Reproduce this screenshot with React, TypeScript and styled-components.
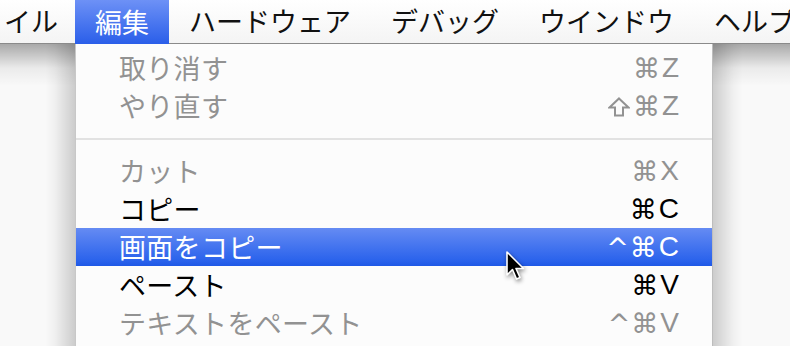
import styled, { createGlobalStyle } from 'styled-components'

const Global = createGlobalStyle`
  html, body {
    margin: 0;
    padding: 0;
    background: #f7f7f7;
  }
  body {
    font-family: "Noto Sans CJK JP", "DejaVu Sans", sans-serif;
  }
`

const Screen = styled.div`
  position: relative;
  width: 790px;
  height: 346px;
  overflow: hidden;
  display: flex;
  flex-direction: column;
  background: #f7f7f7;
`

const MenuBar = styled.div`
  display: flex;
  height: 43px;
  flex: none;
  background: linear-gradient(#ffffff, #f4f4f4);
  border-bottom: 1px solid #8a8a8a;
  white-space: nowrap;
`

const BarItem = styled.div<{ $active?: boolean }>`
  display: flex;
  align-items: center;
  flex: none;
  padding: 0 20px 2px;
  font-size: 27px;
  line-height: 1;
  color: ${(p) => (p.$active ? '#ffffff' : '#111111')};
  background: ${(p) => (p.$active ? 'linear-gradient(#6d91f6, #2a5ee9)' : 'transparent')};
  margin-bottom: ${(p) => (p.$active ? '-1px' : '0')};
`

const FirstItem = styled(BarItem)`
  padding-left: 4px;
  padding-right: 17px;
`

const Below = styled.div`
  display: flex;
  flex: 1;
  min-height: 0;
`

const Shade = styled.div<{ $side: 'left' | 'right' }>`
  flex: ${(p) => (p.$side === 'left' ? '0 0 75px' : '1')};
  background:
    linear-gradient(rgba(0, 0, 0, 0.32), rgba(0, 0, 0, 0.06) 24px, rgba(0, 0, 0, 0) 42px),
    linear-gradient(
      ${(p) => (p.$side === 'left' ? 'to left' : 'to right')},
      rgba(0, 0, 0, 0.18),
      rgba(0, 0, 0, 0.04) 20px,
      rgba(0, 0, 0, 0) 30px
    ),
    #f9f9f9;
`

const Menu = styled.div`
  flex: 0 0 638px;
  background: #fcfcfc;
  border-left: 1px solid #c8c8c8;
  border-right: 1px solid #bdbdbd;
  box-sizing: border-box;
  padding-top: 5px;
  display: flex;
  flex-direction: column;
`

const Row = styled.div<{ $disabled?: boolean; $selected?: boolean }>`
  display: flex;
  align-items: center;
  justify-content: space-between;
  height: 38px;
  flex: none;
  padding: 0 33px 0 43px;
  font-size: 27px;
  line-height: 1;
  color: ${(p) => (p.$selected ? '#ffffff' : p.$disabled ? '#929292' : '#000000')};
  background: ${(p) => (p.$selected ? 'linear-gradient(#658bf3, #2b63ec 85%, #1f58e6)' : 'transparent')};
`

const Label = styled.span`
  padding-bottom: 2px;
  letter-spacing: 0.3px;
`

const Keys = styled.span`
  display: flex;
  align-items: center;
  font-family: "DejaVu Sans", "Liberation Sans", sans-serif;
  font-size: 27px;
`

const Mods = styled.span`
  display: flex;
  align-items: center;
  letter-spacing: 1px;
`

const ShiftIcon = styled.svg`
  margin-right: 3px;
  margin-top: 1px;
`

const Key = styled.span`
  font-family: "Liberation Sans", "DejaVu Sans", sans-serif;
  font-size: 28px;
  margin-left: 1px;
`

const Separator = styled.div`
  height: 27px;
  flex: none;
  display: flex;
  align-items: center;
  &::after {
    content: '';
    flex: 1;
    height: 2px;
    background: #e2e2e2;
  }
`

const Cursor = styled.svg`
  position: absolute;
  left: 505px;
  top: 251px;
  filter: drop-shadow(1px 2px 2px rgba(0, 0, 0, 0.45));
`

type Item = {
  label: string
  mods?: string
  shift?: boolean
  key?: string
  disabled?: boolean
  selected?: boolean
  sep?: boolean
}

const items: Item[] = [
  { label: '取り消す', mods: '⌘', key: 'Z', disabled: true },
  { label: 'やり直す', mods: '⌘', shift: true, key: 'Z', disabled: true },
  { label: '', sep: true },
  { label: 'カット', mods: '⌘', key: 'X', disabled: true },
  { label: 'コピー', mods: '⌘', key: 'C' },
  { label: '画面をコピー', mods: '^⌘', key: 'C', selected: true },
  { label: 'ペースト', mods: '⌘', key: 'V' },
  { label: 'テキストをペースト', mods: '^⌘', key: 'V', disabled: true },
]

const App = () => {
  return (
    <Screen>
      <Global />
      <MenuBar>
        <FirstItem>イル</FirstItem>
        <BarItem $active>編集</BarItem>
        <BarItem>ハードウェア</BarItem>
        <BarItem>デバッグ</BarItem>
        <BarItem>ウインドウ</BarItem>
        <BarItem>ヘルプ</BarItem>
      </MenuBar>
      <Below>
        <Shade $side="left" />
        <Menu>
          {items.map((it, i) =>
            it.sep ? (
              <Separator key={i} />
            ) : (
              <Row key={i} $disabled={it.disabled} $selected={it.selected}>
                <Label>{it.label}</Label>
                {it.key && (
                  <Keys>
                    <Mods>
                      {it.shift && (
                        <ShiftIcon width="22" height="20" viewBox="0 0 22 20">
                          <path
                            d="M11 1.5 L20.5 10.5 L15 10.5 L15 18.5 L7 18.5 L7 10.5 L1.5 10.5 Z"
                            fill="none"
                            stroke="currentColor"
                            strokeWidth="2"
                            strokeLinejoin="miter"
                          />
                        </ShiftIcon>
                      )}
                      {it.mods}
                    </Mods>
                    <Key>{it.key}</Key>
                  </Keys>
                )}
              </Row>
            )
          )}
        </Menu>
        <Shade $side="right" />
      </Below>
      <Cursor width="22" height="32" viewBox="0 0 22 32">
        <path
          d="M2 1 L2 24 L7.5 18.5 L11.5 28 L15 26.5 L11 17.5 L18.5 17.5 Z"
          fill="#000"
          stroke="#fff"
          strokeWidth="1.6"
          strokeLinejoin="round"
        />
      </Cursor>
    </Screen>
  )
}

export default App
